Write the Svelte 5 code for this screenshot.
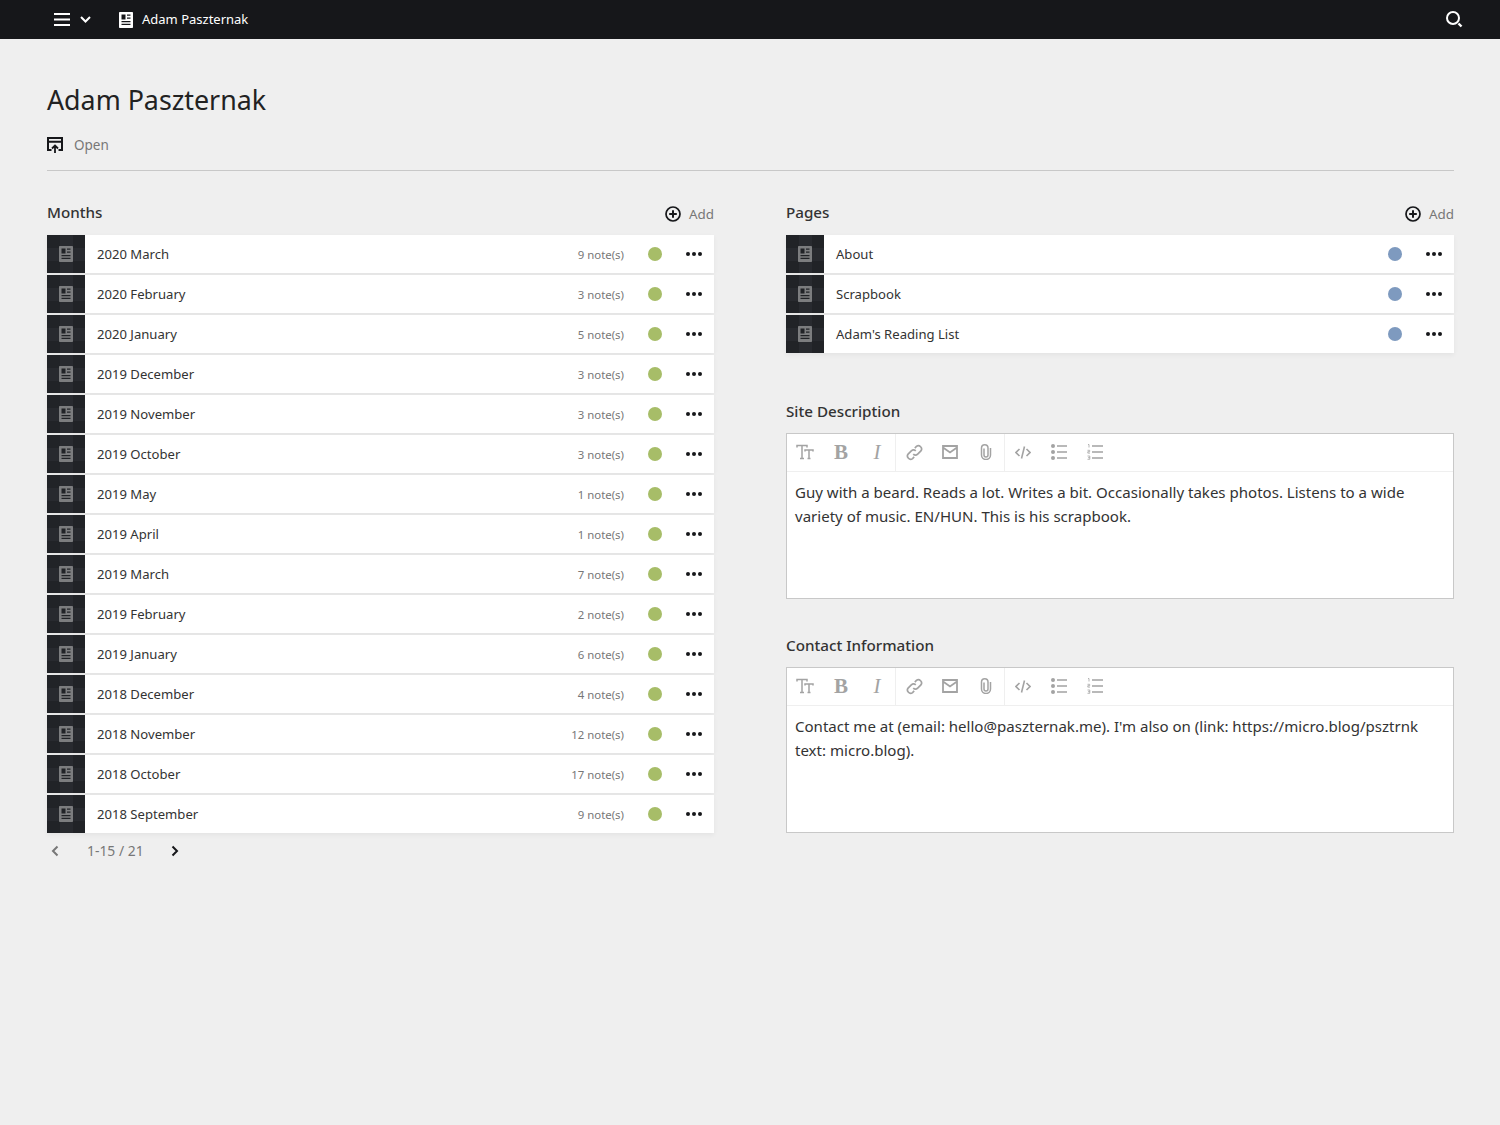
<script>
  const months = [
    ['2020 March', 9], ['2020 February', 3], ['2020 January', 5], ['2019 December', 3], ['2019 November', 3],
    ['2019 October', 3], ['2019 May', 1], ['2019 April', 1], ['2019 March', 7], ['2019 February', 2],
    ['2019 January', 6], ['2018 December', 4], ['2018 November', 12], ['2018 October', 17], ['2018 September', 9]
  ];
  const pages = ['About', 'Scrapbook', "Adam's Reading List"];
  const editors = [
    {
      title: 'Site Description',
      text: 'Guy with a beard. Reads a lot. Writes a bit. Occasionally takes photos. Listens to a wide variety of music. EN/HUN. This is his scrapbook.'
    },
    {
      title: 'Contact Information',
      text: "Contact me at (email: hello@paszternak.me). I'm also on (link: https://micro.blog/psztrnk text: micro.blog)."
    }
  ];
</script>

{#snippet pageIcon()}
  <svg viewBox="0 0 14 16" class="page-svg">
    <path fill="currentColor" fill-rule="evenodd" d="M.8 0h12.400a.8.8 0 0 1 .8.8v14.400a.8.8 0 0 1-.8.8H.8a.8.8 0 0 1-.8-.8V.8A.8.800 0 0 1 .8 0zM2.500 2.500v5h4v-5h-4zM8 2.500v1.200h3.500V2.500H8zM8 5.500v1.200h3.500V5.500H8zM2.500 9v1.200h9V9h-9zM2.500 11.800V13h9v-1.200h-9z"/>
  </svg>
{/snippet}

{#snippet addButton()}
  <div class="add">
    <svg viewBox="0 0 16 16" width="16" height="16">
      <circle cx="8" cy="8" r="7" fill="none" stroke="#16171a" stroke-width="1.700"/>
      <path d="M8 4.200v7.600M4.200 8h7.600" stroke="#16171a" stroke-width="2"/>
    </svg>
    <span>Add</span>
  </div>
{/snippet}

{#snippet row(label, count, tone)}
  <div class="row">
    <div class="thumb">{@render pageIcon()}</div>
    <div class="row-title">{label}</div>
    {#if count}<div class="row-count">{count} note(s)</div>{/if}
    <span class="dot {tone}"></span>
    <div class="dots"><i></i><i></i><i></i></div>
  </div>
{/snippet}

<header class="topbar">
  <div class="menu">
    <svg viewBox="0 0 16 13" width="16" height="13"><path d="M0 1h16M0 6.500h16M0 12h16" stroke="#fff" stroke-width="2"/></svg>
    <svg class="chev" viewBox="0 0 11 7" width="11" height="7"><path d="M1 1l4.500 4.500L10 1" fill="none" stroke="#fff" stroke-width="2"/></svg>
  </div>
  <div class="crumb">
    {@render pageIcon()}
    <span>Adam Paszternak</span>
  </div>
  <svg class="search" viewBox="0 0 17 17" width="17" height="17">
    <circle cx="7" cy="7" r="6" fill="none" stroke="#fff" stroke-width="2"/>
    <path d="M12.500 12.500l3 3" stroke="#fff" stroke-width="2.400"/>
  </svg>
</header>

<main class="page">
  <h1>Adam Paszternak</h1>
  <div class="open">
    <svg viewBox="0 0 16 16" width="16" height="16">
      <path d="M1 9V1h14v12h-3.500M4.500 13H1V9M1 4.800h14" fill="none" stroke="#16171a" stroke-width="2"/>
      <path d="M8 16V9.500M5 11.500l3-3 3 3" fill="none" stroke="#16171a" stroke-width="1.800"/>
    </svg>
    <span>Open</span>
  </div>

  <div class="columns">
    <section>
      <div class="section-head">
        <h2>Months</h2>
        {@render addButton()}
      </div>
      <div class="list">
        {#each months as [label, count]}
          {@render row(label, count, 'green')}
        {/each}
      </div>
      <nav class="pager">
        <svg viewBox="0 0 8 12" width="8" height="12"><path d="M6.500 1.500L2 6l4.500 4.500" fill="none" stroke="#777" stroke-width="2"/></svg>
        <span>1-15 / 21</span>
        <svg viewBox="0 0 8 12" width="8" height="12"><path d="M1.500 1.500L6 6l-4.500 4.500" fill="none" stroke="#16171a" stroke-width="2"/></svg>
      </nav>
    </section>

    <section>
      <div class="section-head">
        <h2>Pages</h2>
        {@render addButton()}
      </div>
      <div class="list">
        {#each pages as label}
          {@render row(label, 0, 'blue')}
        {/each}
      </div>

      {#each editors as editor}
        <div class="field">
          <h2>{editor.title}</h2>
          <div class="editor">
            <div class="toolbar">
              <div class="tool-group">
                <button aria-label="Heading">
                  <svg viewBox="0 0 18 16" width="18" height="16"><path d="M1 3.500V1.500h10v2M6 1.500v13M4 14.500h4M9 7.500V6h8v1.500M13 6v8.500M11.500 14.500h3" fill="none" stroke="#a3a3a3" stroke-width="1.500"/></svg>
                </button>
                <button aria-label="Bold"><span class="glyph bold">B</span></button>
                <button aria-label="Italic"><span class="glyph italic">I</span></button>
              </div>
              <div class="tool-group">
                <button aria-label="Link">
                  <svg viewBox="0 0 16 16" width="17" height="17"><path d="M6.800 9.500a3 3 0 0 0 4.200 0l3-3a3 3 0 0 0-4.200-4.200L8.300 3.800M9.200 6.500a3 3 0 0 0-4.200 0l-3 3a3 3 0 0 0 4.200 4.200l1.500-1.500" fill="none" stroke="#a3a3a3" stroke-width="1.600"/></svg>
                </button>
                <button aria-label="Email">
                  <svg viewBox="0 0 16 14" width="16" height="14"><path d="M1 1h14v12H1zM1 2.500l7 5 7-5" fill="none" stroke="#a3a3a3" stroke-width="1.800"/></svg>
                </button>
                <button aria-label="File">
                  <svg viewBox="0 0 14 16" width="14" height="16"><path d="M5 4.500v6.500a2 2 0 0 0 4 0V4a3.250 3.250 0 0 0-6.500 0v7a4.500 4.500 0 0 0 9 0V4" fill="none" stroke="#a3a3a3" stroke-width="1.500"/></svg>
                </button>
              </div>
              <div class="tool-group last">
                <button aria-label="Code">
                  <svg viewBox="0 0 16 13" width="16" height="13"><path d="M4.500 3L1 6.500 4.500 10M11.500 3L15 6.500 11.500 10M9.500 .5L6.500 12.500" fill="none" stroke="#a3a3a3" stroke-width="1.600"/></svg>
                </button>
                <button aria-label="List">
                  <svg viewBox="0 0 16 16" width="16" height="16"><path d="M6 2h10M6 8h10M6 14h10" stroke="#a3a3a3" stroke-width="1.600"/><circle cx="2" cy="2" r="2" fill="#a3a3a3"/><circle cx="2" cy="8" r="2" fill="#a3a3a3"/><circle cx="2" cy="14" r="2" fill="#a3a3a3"/></svg>
                </button>
                <button aria-label="Ordered list">
                  <svg viewBox="0 0 16 16" width="16" height="16"><path d="M5 2h11M5 8h11M5 14h11" stroke="#a3a3a3" stroke-width="1.600"/><path d="M1 .5h1v3M.5 6.300h2.200v1.400H.8v1.400H3M.5 12h2.300v3.300H.5M1 13.700h2" fill="none" stroke="#a3a3a3" stroke-width=".8"/></svg>
                </button>
              </div>
            </div>
            <div class="editor-text">{editor.text}</div>
          </div>
        </div>
      {/each}
    </section>
  </div>
</main>

<style>
  :global(body) {
    margin: 0;
    background: #efefef;
    color: #16171a;
    font-family: 'Noto Sans', 'Open Sans', sans-serif;
    min-height: 1125px;
  }

  h1,
  h2 {
    margin: 0;
    font-weight: 400;
  }

  svg {
    display: block;
    flex: none;
  }

  .topbar {
    height: 39px;
    background: #16171a;
    color: #fff;
    display: flex;
    align-items: center;
    padding: 0 37px 0 54px;
  }

  .menu {
    display: flex;
    align-items: center;
    gap: 10px;
  }

  .crumb {
    display: flex;
    align-items: center;
    gap: 9px;
    margin-left: 28px;
    font-size: 13px;
  }

  .crumb span {
    margin-top: -2px;
  }

  .crumb .page-svg {
    width: 14px;
    height: 16px;
  }

  .search {
    margin-left: auto;
  }

  .page {
    padding: 0 46px 0 47px;
  }

  h1 {
    font-size: 26.800px;
    line-height: 40px;
    padding-top: 41px;
    color: #222;
  }

  .open {
    display: flex;
    align-items: center;
    gap: 11px;
    margin-top: 15px;
    padding-bottom: 15px;
    border-bottom: 1px solid #c8c8c8;
    font-size: 13.500px;
    line-height: 20px;
    color: #777;
  }

  .columns {
    display: grid;
    grid-template-columns: 667px 668px;
    gap: 72px;
    margin-top: 29px;
  }

  .section-head {
    display: flex;
    justify-content: space-between;
    align-items: center;
    height: 26px;
    margin-bottom: 9px;
  }

  .section-head h2 {
    margin-top: -2px;
  }

  h2 {
    font-size: 15.200px;
    font-weight: 500;
    line-height: 26px;
    color: #333;
  }

  .add {
    display: flex;
    align-items: center;
    gap: 8px;
    margin-top: 2px;
    font-size: 13.400px;
    color: #777;
  }

  .list {
    display: flex;
    flex-direction: column;
    gap: 2px;
  }

  .row {
    display: flex;
    align-items: center;
    height: 38px;
    background: #fff;
    box-shadow: 0 2px 5px rgba(22, 23, 26, 0.05);
  }

  .thumb {
    width: 38px;
    height: 38px;
    flex: none;
    display: flex;
    align-items: center;
    justify-content: center;
    color: #7c7d7f;
    background: repeating-conic-gradient(#282a2f 0 25%, #212327 0 50%) 0 0 / 26px 26px;
  }

  .thumb .page-svg {
    width: 14px;
    height: 16px;
  }

  .row-title {
    flex: 1;
    margin-left: 12px;
    font-size: 13.100px;
    color: #333;
  }

  .row-count {
    font-size: 11.400px;
    color: #777;
  }

  .dot {
    width: 14px;
    height: 14px;
    border-radius: 50%;
    margin-left: 24px;
  }

  .green {
    background: #a7bd68;
  }

  .blue {
    background: #7e9abf;
  }

  .dots {
    display: flex;
    gap: 2px;
    margin: 0 12px 0 24px;
  }

  .dots i {
    width: 4px;
    height: 4px;
    border-radius: 50%;
    background: #16171a;
  }

  .pager {
    display: flex;
    align-items: center;
    height: 36px;
    padding-left: 4px;
    font-size: 13.900px;
    color: #777;
  }

  .pager span {
    margin: -2px 27px 0 28px;
  }

  .field {
    margin-top: 44px;
  }

  .field + .field {
    margin-top: 32px;
  }

  .field h2 {
    padding-top: 1px;
    margin-bottom: 9px;
  }

  .editor {
    width: 666px;
    height: 164px;
    background: #fff;
    border: 1px solid #c8c8c8;
  }

  .toolbar {
    display: flex;
    height: 37px;
    border-bottom: 1px solid #efefef;
  }

  .tool-group {
    display: flex;
    border-right: 1px solid #efefef;
  }

  .tool-group.last {
    border-right: 0;
  }

  .toolbar button {
    width: 36px;
    height: 36px;
    padding: 0;
    border: 0;
    background: none;
    display: flex;
    align-items: center;
    justify-content: center;
  }

  .glyph {
    color: #a3a3a3;
    font-family: 'Liberation Serif', serif;
    font-size: 21px;
    line-height: 1;
  }

  .bold {
    font-weight: 700;
  }

  .italic {
    font-style: italic;
  }

  .editor-text {
    padding: 8px 8px 0;
    font-size: 15.050px;
    line-height: 24px;
    color: #333;
  }
</style>
